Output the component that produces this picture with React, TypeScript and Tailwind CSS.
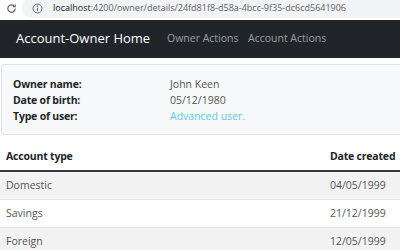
import React from "react";

export default function App() {
  const rows = [
    ["Domestic", "04/05/1999"],
    ["Savings", "21/12/1999"],
    ["Foreign", "12/05/1999"],
  ];
  return (
    <div className="w-[400px] h-[250px] overflow-hidden bg-white" style={{ fontFamily: "'Open Sans', 'Noto Sans', sans-serif" }}>
      {/* browser address bar */}
      <div className="h-[20px] bg-white flex items-center">
        <div className="w-[22px] flex items-center justify-center -mt-[4px]">
          <svg width="11" height="11" viewBox="0 0 24 24" fill="none" stroke="#5f6368" strokeWidth="2.6">
            <path d="M20 12a8 8 0 1 1-2.4-5.7" />
            <path d="M20 3v5h-5" fill="none" />
          </svg>
        </div>
        <div className="flex-1 h-[20px] -mt-[4px] bg-[#f1f3f4] rounded-l-full flex items-center pl-[10px]">
          <svg width="11" height="11" viewBox="0 0 16 16" fill="none" stroke="#5f6368" strokeWidth="1.4">
            <circle cx="8" cy="8" r="6.5" />
            <path d="M8 7v4.5" />
            <circle cx="8" cy="4.8" r="0.6" fill="#5f6368" />
          </svg>
          <span className="ml-[10px] text-[9px] whitespace-nowrap text-[#5f6368]">
            <span className="text-[#202124]">localhost</span>:4200/owner/details/24fd81f8-d58a-4bcc-9f35-dc6cd5641906
          </span>
        </div>
      </div>
      {/* navbar */}
      <nav className="h-[38px] bg-[#212529] flex items-center pl-[16px] whitespace-nowrap">
        <span className="text-white text-[13px] w-[151px]">Account-Owner Home</span>
        <span className="text-[#9a9da0] text-[10.5px] w-[81px]">Owner Actions</span>
        <span className="text-[#9a9da0] text-[10.5px]">Account Actions</span>
      </nav>
      {/* card */}
      <div className="mt-[6px] ml-[1px] w-[410px] h-[71px] bg-[#f8f9fa] border border-[#e2e3e5] rounded-[3px] pt-[11px] pl-[11px] text-[10.5px] leading-[16px]">
        <div className="flex">
          <div className="w-[157px] font-bold tracking-[-0.2px] text-[#212529]">Owner name:</div>
          <div className="text-[#555]">John Keen</div>
        </div>
        <div className="flex">
          <div className="w-[157px] font-bold tracking-[-0.2px] text-[#212529]">Date of birth:</div>
          <div className="text-[#555]">05/12/1980</div>
        </div>
        <div className="flex">
          <div className="w-[157px] font-bold tracking-[-0.2px] text-[#212529]">Type of user:</div>
          <div className="text-[#5bc8ec]">Advanced user.</div>
        </div>
      </div>
      {/* table */}
      <div className="mt-[8px] text-[10.5px]">
        <div className="h-[29px] flex items-center justify-between pl-[6px] font-bold tracking-[-0.2px] text-[#212529] border-b-2 border-[#3a3d40] whitespace-nowrap">
          <span>Account type</span>
          <span className="w-[70px]">Date created</span>
        </div>
        {rows.map(([t, d], i) => (
          <div key={t} className={`h-[28px] flex items-center justify-between pl-[6px] text-[#555] border-b border-[#e4e4e4] ${i % 2 === 0 ? "bg-[#f2f2f2]" : "bg-white"}`}>
            <span>{t}</span>
            <span className="w-[70px]">{d}</span>
          </div>
        ))}
      </div>
    </div>
  );
}
